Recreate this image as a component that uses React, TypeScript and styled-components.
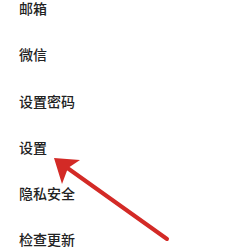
import React from "react";
import styled, { createGlobalStyle } from "styled-components";

const Global = createGlobalStyle`
  html, body { margin: 0; padding: 0; background: #ffffff; }
  body { width: 248px; height: 247px; overflow: hidden; }
`;

const Page = styled.div`
  position: relative;
  width: 248px;
  height: 247px;
  background: #ffffff;
  overflow: hidden;
`;

const Menu = styled.ul`
  list-style: none;
  margin: -2px 0 0 0;
  padding: 0 0 0 19px;
  display: flex;
  flex-direction: column;
  gap: 26.3px;
`;

const Item = styled.li`
  height: 20px;
  line-height: 20px;
  font-family: "Noto Sans CJK SC", "Noto Sans", sans-serif;
  font-size: 14px;
  font-weight: 500;
  color: #222222;
`;

const Arrow = styled.svg`
  position: absolute;
  left: 0;
  top: 0;
  pointer-events: none;
`;

const items = ["邮箱", "微信", "设置密码", "设置", "隐私安全", "检查更新"];

export default function App() {
  return (
    <Page>
      <Global />
      <Menu>
        {items.map((t) => (
          <Item key={t}>{t}</Item>
        ))}
      </Menu>
      <Arrow width="248" height="247" viewBox="0 0 248 247">
        <line x1="66" y1="167" x2="167" y2="239" stroke="#d32a26" strokeWidth="4" strokeLinecap="round" />
        <polygon points="54,158 80,160 68,168 62,184" fill="#d32a26" />
      </Arrow>
    </Page>
  );
}
